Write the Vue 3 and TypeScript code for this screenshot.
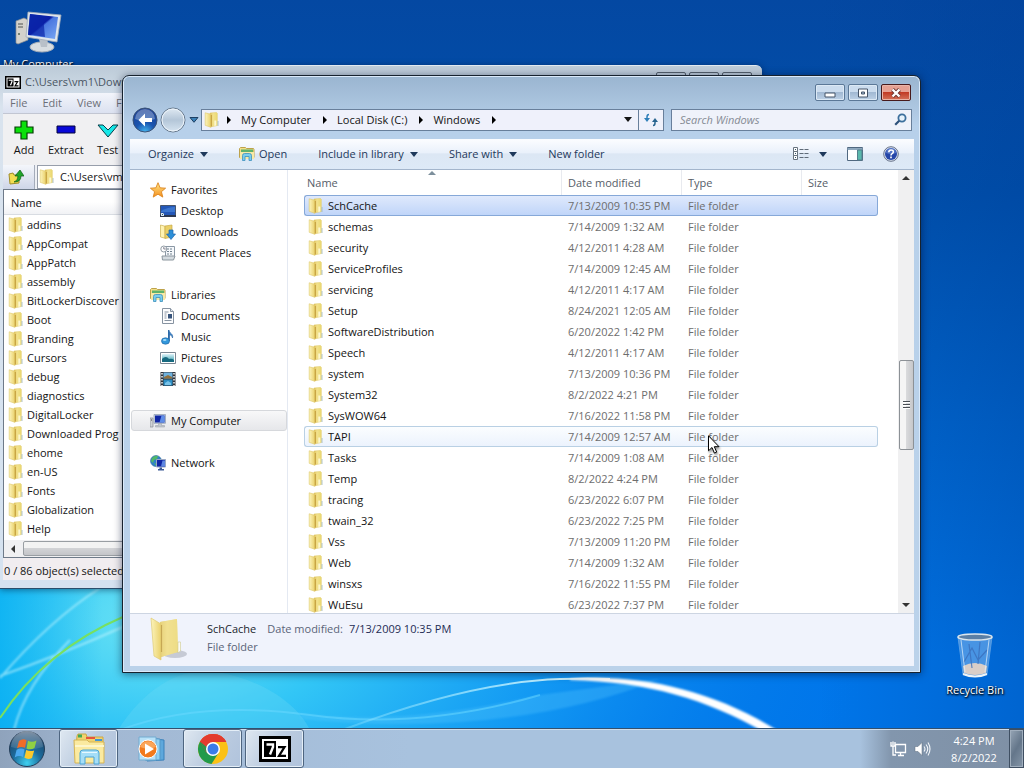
<script setup lang="ts">
import { ref } from 'vue'

interface FileRow {
  name: string
  date: string
}
interface NavItem {
  label: string
  icon: string
  level: number
  current?: boolean
}

const archiveFolders: string[] = [
  'addins', 'AppCompat', 'AppPatch', 'assembly', 'BitLockerDiscover', 'Boot',
  'Branding', 'Cursors', 'debug', 'diagnostics', 'DigitalLocker', 'Downloaded Prog',
  'ehome', 'en-US', 'Fonts', 'Globalization', 'Help',
]

const files: FileRow[] = [
  { name: 'SchCache', date: '7/13/2009 10:35 PM' },
  { name: 'schemas', date: '7/14/2009 1:32 AM' },
  { name: 'security', date: '4/12/2011 4:28 AM' },
  { name: 'ServiceProfiles', date: '7/14/2009 12:45 AM' },
  { name: 'servicing', date: '4/12/2011 4:17 AM' },
  { name: 'Setup', date: '8/24/2021 12:05 AM' },
  { name: 'SoftwareDistribution', date: '6/20/2022 1:42 PM' },
  { name: 'Speech', date: '4/12/2011 4:17 AM' },
  { name: 'system', date: '7/13/2009 10:36 PM' },
  { name: 'System32', date: '8/2/2022 4:21 PM' },
  { name: 'SysWOW64', date: '7/16/2022 11:58 PM' },
  { name: 'TAPI', date: '7/14/2009 12:57 AM' },
  { name: 'Tasks', date: '7/14/2009 1:08 AM' },
  { name: 'Temp', date: '8/2/2022 4:24 PM' },
  { name: 'tracing', date: '6/23/2022 6:07 PM' },
  { name: 'twain_32', date: '6/23/2022 7:25 PM' },
  { name: 'Vss', date: '7/13/2009 11:20 PM' },
  { name: 'Web', date: '7/14/2009 1:32 AM' },
  { name: 'winsxs', date: '7/16/2022 11:55 PM' },
  { name: 'WuEsu', date: '6/23/2022 7:37 PM' },
]

const navGroups: NavItem[][] = [
  [
    { label: 'Favorites', icon: 'star', level: 0 },
    { label: 'Desktop', icon: 'desktop', level: 1 },
    { label: 'Downloads', icon: 'downloads', level: 1 },
    { label: 'Recent Places', icon: 'recent', level: 1 },
  ],
  [
    { label: 'Libraries', icon: 'library', level: 0 },
    { label: 'Documents', icon: 'document', level: 1 },
    { label: 'Music', icon: 'music', level: 1 },
    { label: 'Pictures', icon: 'picture', level: 1 },
    { label: 'Videos', icon: 'video', level: 1 },
  ],
  [{ label: 'My Computer', icon: 'computer', level: 0, current: true }],
  [{ label: 'Network', icon: 'network', level: 0 }],
]

const crumbs: string[] = ['My Computer', 'Local Disk (C:)', 'Windows']
const selected = ref('SchCache')
const hovered = ref('TAPI')
const search = ref('')
const archivePath = ref('C:\\Users\\vm1\\Downloads\\')
</script>

<template>
  <div class="desktop">
    <svg class="defs" aria-hidden="true">
      <defs>
        <linearGradient id="gFront" x1="0" x2="1"><stop offset="0" stop-color="#fcf4bc" /><stop offset="1" stop-color="#ead16c" /></linearGradient>
        <linearGradient id="gBack" x1="0" x2="1"><stop offset="0" stop-color="#d9b94e" /><stop offset=".4" stop-color="#f3e28e" /><stop offset="1" stop-color="#ead970" /></linearGradient>
        <linearGradient id="gScreen" x1="0" y1="0" x2="1" y2="1"><stop offset="0" stop-color="#0d2fb0" /><stop offset=".45" stop-color="#0a1ea6" /><stop offset=".5" stop-color="#4a78e0" /><stop offset="1" stop-color="#7aa8f4" /></linearGradient>
        <linearGradient id="gStar" x1="0" y1="0" x2="0" y2="1"><stop offset="0" stop-color="#ffe98a" /><stop offset="1" stop-color="#f58e1c" /></linearGradient>
        <linearGradient id="gSky" x1="0" y1="0" x2="0" y2="1"><stop offset="0" stop-color="#dff4fb" /><stop offset="1" stop-color="#2c9aa8" /></linearGradient>
        <radialGradient id="gOrb" cx=".5" cy=".9" r=".9"><stop offset="0" stop-color="#3fd0f0" /><stop offset=".45" stop-color="#1c6c9c" /><stop offset="1" stop-color="#1c3c60" /></radialGradient>
        <linearGradient id="gGloss" x1="0" y1="0" x2="0" y2="1"><stop offset="0" stop-color="#fff" stop-opacity=".75" /><stop offset="1" stop-color="#fff" stop-opacity=".15" /></linearGradient>
        <radialGradient id="gNav" cx=".5" cy="1" r="1"><stop offset="0" stop-color="#45b8f0" /><stop offset=".4" stop-color="#1a55b0" /><stop offset="1" stop-color="#1c3f92" /></radialGradient>
        <linearGradient id="gFwd" x1="0" y1="0" x2="0" y2="1"><stop offset="0" stop-color="#e0eaf3" /><stop offset=".5" stop-color="#b4c6d8" /><stop offset="1" stop-color="#d6e4f1" /></linearGradient>
      </defs>
      <symbol id="folder" viewBox="0 0 16 16">
        <path d="M6 1 12.500.5l.8 1v12L6 15z" fill="url(#gBack)" stroke="#e2cc70" stroke-width=".6" />
        <path d="M1.200.8 6.800 2.300v13l-5.600-2z" fill="url(#gFront)" stroke="#dfc868" stroke-width=".6" />
        <path d="M7.300 3v11.500" stroke="#b98f2c" stroke-width=".8" />
        <path d="M10.300 8.500h2v5l-2 .6z" fill="#fdf7cf" />
        <path d="M14 9v5" stroke="#9db6c0" stroke-width=".8" />
      </symbol>
      <symbol id="bigfolder" viewBox="0 0 40 44">
        <ellipse cx="27" cy="37" rx="12" ry="4" fill="#5b6070" opacity=".28" />
        <path d="M12 5 29 2l1 33-17 5z" fill="url(#gBack)" />
        <path d="M12 5 29 2l1 33-17 5z" fill="#f0df92" opacity=".65" />
        <path d="M30 25h2.500v9L30 36z" fill="#fbfbf4" stroke="#c9c27c" stroke-width=".5" />
        <path d="M3 1l10 6v36L6 39z" fill="url(#gFront)" stroke="#e0cb74" stroke-width=".7" />
        <path d="M13.500 8v27" stroke="#b99845" stroke-width="1.200" opacity=".7" />
      </symbol>
      <symbol id="star" viewBox="0 0 16 16"><path d="M8 .7l2.100 5.100 5.500.4-4.200 3.500 1.400 5.400L8 12.200l-4.800 2.900 1.400-5.400L.4 6.200l5.500-.4z" fill="url(#gStar)" stroke="#dc8620" stroke-width=".9" /></symbol>
      <symbol id="desktop" viewBox="0 0 16 16"><path d="M.5 2.500h15v11H.5z" fill="#2458b8" stroke="#48566c" /><path d="M1 8q7-4 14-4v5H1z" fill="#4c8ade" opacity=".6" /><path d="M0 12h16v2H0z" fill="#2c3850" /><path d="M1 10h3v3H1z" fill="#dbe9f6" /><path d="M2 12l1.500-1.500" stroke="#356" /></symbol>
      <symbol id="downloads" viewBox="0 0 16 16"><path d="M.5 1 5 2.200v12L.5 13z" fill="#fff3b2" stroke="#cdb355" stroke-width=".7" /><path d="M5 2l7-1v12l-7 1.500z" fill="#ead067" stroke="#c8ab47" stroke-width=".7" /><path d="M9 6h4v4h2.500L11 15.500 6.500 10H9z" fill="#2d8fd8" stroke="#1d64ac" stroke-width=".7" /></symbol>
      <symbol id="recent" viewBox="0 0 16 16"><path d="M5.500 1.500h9v11h-9z" fill="#f5f8fb" stroke="#8b98a5" /><path d="M7 4h6M7 6.500h6M7 9h6" stroke="#71818f" stroke-dasharray="2 1" /><circle cx="3.800" cy="4" r="3" fill="#fff" stroke="#919ca5" /><path d="M3.800 2v2h2" fill="none" stroke="#667" stroke-width=".8" /><path d="M2 11h13l-1.500 4h-11z" fill="#d4dbe0" stroke="#8b969e" /></symbol>
      <symbol id="library" viewBox="0 0 16 16"><path d="M.5 2.500l1-1h5l1 1h7l.5 1v8H.5z" fill="#f3df88" stroke="#bda24b" /><path d="M2 3.500h12v3H2z" fill="#5fb26b" /><path d="M1 6h14v7H1z" fill="#f7e9a6" /><path d="M3.500 14.500v-5q0-2 2-2h5q2 0 2 2v5h-2.500v-4h-4v4z" fill="#79cdee" stroke="#3d91bd" stroke-width=".8" /></symbol>
      <symbol id="document" viewBox="0 0 16 16"><path d="M2.500.5h8l3 3v12h-11z" fill="#fdfdfe" stroke="#8793a1" /><path d="M10.500.5v3h3" fill="#dfe6ee" stroke="#8793a1" /><path d="M4.500 4h4M4.500 6h2M4.500 8h2M4.500 10h2M4.500 12.500h7" stroke="#8793a1" /><path d="M8 6h4v4.500H8z" fill="#38547c" /></symbol>
      <symbol id="music" viewBox="0 0 16 16"><path d="M8.500 1c1 3.500 5 3.500 4 8-.4-2-1.500-3-3.200-3.200V12z" fill="#3f86c8" stroke="#235e9d" stroke-width=".6" /><path d="M8.700 1v11" stroke="#2e6aa8" stroke-width="1.400" /><ellipse cx="5.500" cy="12" rx="4" ry="3.200" fill="#3298dc" stroke="#2369a6" stroke-width=".7" /><ellipse cx="4.700" cy="11" rx="1.800" ry="1" fill="#a5daf8" /></symbol>
      <symbol id="picture" viewBox="0 0 16 16"><path d="M.5 2.500h15v11H.5z" fill="#fff" stroke="#7a8793" /><path d="M2 4h12v8H2z" fill="url(#gSky)" /><path d="M2 9q4-4 7 0 3-1 5 1v2H2z" fill="#176a80" /></symbol>
      <symbol id="video" viewBox="0 0 16 16"><path d="M.5 1h15v14H.5z" fill="#31353c" /><path d="M3.500 1.500h9v6h-9z" fill="#6fb2de" /><path d="M3.500 8.500h9v6h-9z" fill="#2f8fc4" /><path d="M4 6l4-2 4 2v1.500H4z" fill="#93703c" /><path d="M5 12l3-2 3 2v2H5z" fill="#78c3ea" /><path d="M2 2v13M14 2v13" stroke="#fff" stroke-width="1.400" stroke-dasharray="1.500 1.500" /></symbol>
      <symbol id="computer" viewBox="0 0 16 16"><path d="M0 5h3v9H0z" fill="#cfd2d6" stroke="#888e96" stroke-width=".7" /><path d="M1 7h1" stroke="#444" /><path d="M4 1.500h11.500v8.800H4z" fill="#ccd5e4" stroke="#8b99ae" stroke-width=".7" /><path d="M5 2.500h9.500v7H5z" fill="#1026a4" /><path d="M11.500 2.500h3v7h-5z" fill="#5f8de8" /><path d="M8.500 10.500h3v2h3v1.500h-9v-1.500h3z" fill="#c1c6cd" stroke="#969ca5" stroke-width=".5" /></symbol>
      <symbol id="network" viewBox="0 0 16 16"><circle cx="6" cy="6" r="5.500" fill="#2f80c9" stroke="#3d709a" stroke-width=".6" /><path d="M2 3q3-3 6-2l-1 3-3 1-1 3-2-2zM4 8l3 1-1 2z" fill="#51b868" /><path d="M6.500 4.500h9v7.500h-9z" fill="#1026a4" stroke="#9aa9c4" /><path d="M12.500 5.500H15v6h-4z" fill="#5e87e2" /><path d="M9.500 12.500h2.500V14h2v1.500H8V14h1.500z" fill="#3c5a96" /></symbol>
      <symbol id="tri" viewBox="0 0 8 5"><path d="M0 0h8L4 5z" fill="currentColor" /></symbol>
      <symbol id="sevenz" viewBox="0 0 32 26">
        <path d="M0 0h32v26H0z" fill="#000" /><path d="M3 3h26v20H3z" fill="#fff" /><path d="M5 5h12v16H5z" fill="#000" />
        <path d="M7.500 8.500h6.500v2.500l-3 7.500" fill="none" stroke="#fff" stroke-width="2.400" />
        <path d="M19 11.200h6.500L20 19.800H27" fill="none" stroke="#000" stroke-width="2.200" />
      </symbol>
    </svg>

    <svg class="wallpaper" viewBox="0 0 1024 768" preserveAspectRatio="none" aria-hidden="true">
      <defs>
        <linearGradient id="wBase" x1="0" y1="0" x2="0" y2="1"><stop offset="0" stop-color="#0448a2" /><stop offset=".25" stop-color="#0050ac" /><stop offset=".55" stop-color="#0065cd" /><stop offset=".85" stop-color="#0076ea" /><stop offset="1" stop-color="#0076ea" /></linearGradient>
        <radialGradient id="wGlow" gradientUnits="userSpaceOnUse" cx="160" cy="620" r="720" gradientTransform="translate(160 620) scale(1 .6) translate(-160 -620)"><stop offset="0" stop-color="#6ce4f4" /><stop offset=".25" stop-color="#32c6f6" /><stop offset=".55" stop-color="#149cf4" stop-opacity=".9" /><stop offset="1" stop-color="#0076ea" stop-opacity="0" /></radialGradient>
        <linearGradient id="wEdge" x1="0" x2="1"><stop offset=".8" stop-color="#003c94" stop-opacity="0" /><stop offset="1" stop-color="#003c94" stop-opacity=".3" /></linearGradient>
        <linearGradient id="wLeft" x1="0" x2="1"><stop offset="0" stop-color="#00acf2" stop-opacity=".7" /><stop offset=".1" stop-color="#00acf2" stop-opacity="0" /></linearGradient>
        <linearGradient id="wArc" gradientUnits="userSpaceOnUse" x1="340" y1="0" x2="700" y2="0"><stop offset="0" stop-color="#8fe4ff" stop-opacity=".3" /><stop offset=".6" stop-color="#c8f2ff" /><stop offset="1" stop-color="#fff" /></linearGradient>
        <filter id="soft"><feGaussianBlur stdDeviation="1" /></filter>
      </defs>
      <path d="M0 0h1024v768H0z" fill="url(#wBase)" />
      <path d="M0 0h1024v768H0z" fill="url(#wGlow)" />
      <path d="M0 0h1024v768H0z" fill="url(#wEdge)" />
      <path d="M0 580h1024v188H0z" fill="url(#wLeft)" />
      <path d="M118 730C150 680 190 665 222 673c40 8 75 30 88 57z" fill="#73dcf6" opacity=".28" />
      <path d="M300 713q100 14 240-18l120-16q-150 60-360 40z" fill="#58c8ff" opacity=".3" filter="url(#soft)" />
      <path d="M120 730Q200 700 310 715t230-20" fill="none" stroke="#6bd9ff" stroke-width="2" opacity=".5" />
      <path d="M345 729Q470 682 560 679q30-1 50 0" fill="none" stroke="url(#wArc)" stroke-width="2" />
      <path d="M570 679C640 673 715 691 780 732h-16C705 699 650 682 570 680z" fill="#fff" filter="url(#soft)" />
      <path d="M0 676Q60 655 125 626M0 678Q50 620 100 588M14 730Q25 685 70 640" fill="none" stroke="#c5f6ff" stroke-width="2" opacity=".6" filter="url(#soft)" />
      <path d="M0 718Q45 650 125 616" fill="none" stroke="#78e060" stroke-width="2" />
    </svg>

    <button class="shortcut computer-shortcut">
      <svg viewBox="0 0 48 44" width="48" height="44" aria-hidden="true">
        <path d="M2 11l8-3 4 2v20l-10 4-2-1z" fill="#d4d2cc" stroke="#8d8f90" stroke-width=".7" /><path d="M4 14h5M4 17h5" stroke="#4f5350" /><circle cx="5" cy="24" r="1" fill="#565" />
        <ellipse cx="28" cy="37" rx="12" ry="5" fill="#d8dde1" stroke="#a9b0b8" /><path d="M25 29h9l-1 8h-6z" fill="#b9c0c8" />
        <path d="M14 2l33 3-4 27-31-5z" fill="#dfe6ec" stroke="#9faab8" stroke-width=".8" /><path d="M16 4l28 3-3 22-27-4z" fill="url(#gScreen)" /><path d="M16 4l13 2 2 21-17-3z" fill="#0a23a8" opacity=".7" />
      </svg>
      <span>My Computer</span>
    </button>

    <button class="shortcut bin-shortcut">
      <svg viewBox="0 0 40 48" width="40" height="48" aria-hidden="true">
        <path d="M3 5h34l-5 37q-12 5-24 0z" fill="#9fcaf4" opacity=".45" stroke="#c3def4" /><path d="M8 34q12-6 24 0l-1 7q-11 4-22 0z" fill="#d9cec8" /><path d="M9 30l8-14 6 12 9-10M14 12l3 24M25 10l-2 22" fill="none" stroke="#3b6fbc" stroke-width="1.200" opacity=".8" />
        <path d="M6 8l4 32M34 8l-4 32" stroke="#e7f3fb" opacity=".7" /><ellipse cx="20" cy="5" rx="17" ry="3" fill="#5b7fa5" stroke="#dbe5ec" stroke-width="1.500" /><path d="M8 42q12 5 24 0" fill="none" stroke="#eef4f8" stroke-width="2" />
      </svg>
      <span>Recycle Bin</span>
    </button>

    <section class="window archive" aria-label="7-Zip File Manager">
      <header class="archive-title">
        <svg class="seven-small" aria-hidden="true"><use href="#sevenz" /></svg>
        <span>C:\Users\vm1\Downloads\</span>
        <div class="archive-controls">
          <button aria-label="Minimize"></button><button aria-label="Maximize"></button><button aria-label="Close"></button>
        </div>
      </header>
      <nav class="menubar">
        <button>File</button><button>Edit</button><button>View</button><button>Favorites</button>
      </nav>
      <div class="archive-tools">
        <button><svg viewBox="0 0 22 20" aria-hidden="true"><path d="M8 1h6v6h6v6h-6v6H8v-6H2V7h6z" fill="#0be00b" stroke="#063f06" stroke-width="1.200" /></svg>Add</button>
        <button><svg viewBox="0 0 22 20" aria-hidden="true"><path d="M2 6h18v7H2z" fill="#0808d8" stroke="#04043c" /></svg>Extract</button>
        <button><svg viewBox="0 0 22 20" aria-hidden="true"><path d="M1 5h5l5 5 5-5h5L11 17z" fill="#16e8e8" stroke="#063e4a" /></svg>Test</button>
      </div>
      <div class="archive-path">
        <button aria-label="Up one level">
          <svg viewBox="0 0 16 16" width="16" height="16" aria-hidden="true"><path d="M1 5l4-1 1 2h5v8l-9 1z" fill="#f2dd50" stroke="#a08c28" /><path d="M6 13q4-1 4-6H7l5-6 4 6h-3q0 6-7 6z" fill="#22a52a" stroke="#0c5b14" stroke-width=".7" /></svg>
        </button>
        <div class="path-box">
          <svg class="i16" aria-hidden="true"><use href="#folder" /></svg>
          <input v-model="archivePath" aria-label="Path" type="text" />
        </div>
      </div>
      <div class="archive-list">
        <div class="archive-head">Name</div>
        <ul>
          <li v-for="f in archiveFolders" :key="f"><svg class="i16" aria-hidden="true"><use href="#folder" /></svg>{{ f }}</li>
        </ul>
        <div class="hscroll">
          <svg viewBox="0 0 4 8" width="4" height="8" aria-hidden="true"><path d="M4 0v8L0 4z" fill="#333" /></svg>
          <div class="hthumb"></div>
        </div>
      </div>
      <footer class="archive-status">0 / 86 object(s) selected</footer>
    </section>

    <section class="window explorer" aria-label="Windows">
      <header class="controls">
        <button aria-label="Minimize"><svg viewBox="0 0 14 10" width="14" height="10" aria-hidden="true"><path d="M2 5h10v4H2z" fill="#fff" stroke="#455468" /></svg></button>
        <button aria-label="Maximize"><svg viewBox="0 0 14 10" width="14" height="10" aria-hidden="true"><path d="M2.500 1h9v8h-9zM5.500 4v2h3V4z" fill="#fff" fill-rule="evenodd" stroke="#455468" /></svg></button>
        <button class="close" aria-label="Close"><svg viewBox="0 0 14 10" width="14" height="10" aria-hidden="true"><path d="M3.500 1.500l7 7M10.500 1.500l-7 7" stroke="#6b3430" stroke-width="4" /><path d="M3.500 1.500l7 7M10.500 1.500l-7 7" stroke="#fff" stroke-width="2.400" /></svg></button>
      </header>

      <div class="address-row">
        <div class="history">
          <button aria-label="Back"><svg viewBox="0 0 26 26" width="26" height="26" aria-hidden="true"><circle cx="13" cy="13" r="12" fill="url(#gNav)" stroke="#3c5377" /><path d="M3 12a10 10 0 0 1 20 0q-10 4-20 0z" fill="#fff" opacity=".3" /><path d="M13 6.500L6.500 13l6.500 6.500v-4.500h7v-4h-7z" fill="#fff" /></svg></button>
          <button aria-label="Forward"><svg viewBox="0 0 26 26" width="26" height="26" aria-hidden="true"><circle cx="13" cy="13" r="12" fill="url(#gFwd)" stroke="#66788c" /><circle cx="13" cy="13" r="11" fill="none" stroke="#eef5fb" /></svg></button>
          <button class="recent" aria-label="Recent pages"><svg viewBox="0 0 10 6" width="10" height="6" aria-hidden="true"><path d="M1 .5h8L5 5.300z" fill="#3b81b8" stroke="#1d3f63" /></svg></button>
        </div>
        <div class="address">
          <svg class="i16" aria-hidden="true"><use href="#folder" /></svg>
          <svg class="sep" viewBox="0 0 4 8" aria-hidden="true"><path d="M0 0v8l4-4z" /></svg>
          <template v-for="c in crumbs" :key="c">
            <button>{{ c }}</button>
            <svg class="sep" viewBox="0 0 4 8" aria-hidden="true"><path d="M0 0v8l4-4z" /></svg>
          </template>
          <button class="drop" aria-label="Previous locations"><svg class="tri" aria-hidden="true"><use href="#tri" /></svg></button>
          <button class="refresh" aria-label="Refresh">
            <svg viewBox="0 0 16 14" width="16" height="14" aria-hidden="true"><path d="M6 1.500Q4 1.500 4 4v2" fill="none" stroke="#2f7fb9" stroke-width="1.500" /><path d="M1 5h6L4 9z" fill="#2f7fb9" /><path d="M10 12.500q2 0 2-2.500V8" fill="none" stroke="#28648f" stroke-width="1.500" /><path d="M9 9h6L12 5z" fill="#28648f" /></svg>
          </button>
        </div>
        <div class="search">
          <input v-model="search" type="text" placeholder="Search Windows" aria-label="Search Windows" />
          <svg viewBox="0 0 13 13" width="13" height="13" aria-hidden="true"><circle cx="8" cy="5" r="3.600" fill="#e6f2fb" stroke="#3c6f9c" stroke-width="1.800" /><path d="M5.200 7.800L1.200 11.800" stroke="#2c507a" stroke-width="2.200" /></svg>
        </div>
      </div>

      <div class="client">
        <div class="toolbar">
          <button>Organize <svg class="tri" aria-hidden="true"><use href="#tri" /></svg></button>
          <button class="open"><svg class="i16" aria-hidden="true"><use href="#library" /></svg>Open</button>
          <button>Include in library <svg class="tri" aria-hidden="true"><use href="#tri" /></svg></button>
          <button>Share with <svg class="tri" aria-hidden="true"><use href="#tri" /></svg></button>
          <button>New folder</button>
          <div class="view-tools">
            <button class="views" aria-label="Change your view">
              <svg viewBox="0 0 16 14" width="16" height="14" aria-hidden="true"><path d="M.5.5h4v4h-4zM.5 4.500h4v4h-4zM.5 8.500h4v4h-4z" fill="#fff" stroke="#68737f" /><path d="M2 2.500h1M2 6.500h1M2 10.500h1" stroke="#356" /><path d="M6.500 2.500h9M6.500 6.500h9M6.500 10.500h9" stroke="#5f6b78" stroke-dasharray="4 1" /></svg>
              <svg class="tri" aria-hidden="true"><use href="#tri" /></svg>
            </button>
            <button aria-label="Show the preview pane"><svg viewBox="0 0 16 14" width="16" height="14" aria-hidden="true"><path d="M.5.5h15v13H.5z" fill="#fdfeff" stroke="#506880" /><path d="M.5 2h15" stroke="#8ea8be" stroke-width="2" /><path d="M10.500 3h4.500v10h-4.500z" fill="#59b8ac" stroke="#527e8c" /></svg></button>
            <button aria-label="Get help"><svg viewBox="0 0 16 16" width="16" height="16" aria-hidden="true"><circle cx="8" cy="8" r="7.300" fill="#dce5f2" stroke="#667188" /><circle cx="8" cy="8" r="6" fill="#2546a8" /><path d="M3 7a5 5 0 0 1 10 0q-5 2-10 0z" fill="#7fa0e4" opacity=".5" /><path d="M5.800 6.300q0-2.300 2.300-2.300t2.200 1.900q0 1-1.200 1.700T8 9.500" fill="none" stroke="#fff" stroke-width="1.600" /><path d="M8 10.600v1.700" stroke="#fff" stroke-width="1.700" /></svg></button>
          </div>
        </div>

        <div class="panes">
          <nav class="tree" aria-label="Navigation">
            <ul v-for="(g, i) in navGroups" :key="i">
              <li v-for="n in g" :key="n.label">
                <a href="#" :class="{ child: n.level === 1, current: n.current }"><svg class="i16" aria-hidden="true"><use :href="'#' + n.icon" /></svg>{{ n.label }}</a>
              </li>
            </ul>
          </nav>
          <div class="files">
            <table>
              <colgroup><col /><col class="c-date" /><col class="c-type" /><col class="c-size" /></colgroup>
              <thead>
                <tr><th scope="col" class="sorted">Name<svg viewBox="0 0 8 4" width="8" height="4" aria-hidden="true"><path d="M0 4l4-4 4 4z" fill="#7d8f9c" /></svg></th><th scope="col">Date modified</th><th scope="col">Type</th><th scope="col">Size</th></tr>
              </thead>
              <tbody>
                <tr v-for="f in files" :key="f.name" :class="{ selected: f.name === selected, hovered: f.name === hovered }" @click="selected = f.name" @mouseenter="hovered = f.name">
                  <td><svg class="i16" aria-hidden="true"><use href="#folder" /></svg><span>{{ f.name }}</span></td>
                  <td>{{ f.date }}</td>
                  <td>File folder</td>
                  <td></td>
                </tr>
              </tbody>
            </table>
          </div>
          <div class="vscroll">
            <svg viewBox="0 0 8 4" width="8" height="4" aria-hidden="true"><path d="M0 4l4-4 4 4z" fill="#333" /></svg>
            <div class="track"><div class="before"></div><div class="vthumb"><i></i><i></i><i></i></div><div class="after"></div></div>
            <svg viewBox="0 0 8 4" width="8" height="4" aria-hidden="true"><path d="M0 0h8L4 4z" fill="#333" /></svg>
          </div>
        </div>

        <footer class="details">
          <svg width="40" height="44" aria-hidden="true"><use href="#bigfolder" /></svg>
          <div>
            <p><strong>SchCache</strong><span>Date modified:</span><em>7/13/2009 10:35 PM</em></p>
            <p><span>File folder</span></p>
          </div>
        </footer>
      </div>
    </section>

    <footer class="taskbar">
      <button class="start" aria-label="Start">
        <svg viewBox="0 0 38 38" width="38" height="38" aria-hidden="true"><circle cx="19" cy="19" r="17.500" fill="url(#gOrb)" stroke="#233d58" /><path d="M3 17a16 16 0 0 1 32 0q-16 5-32 0z" fill="url(#gGloss)" opacity=".6" /><path d="M11 11q4-3 7.500-.8L17 17.800q-4-2-8 .4z" fill="#f06c28" /><path d="M20 10.800q4 2.200 8.500-.4L26.500 18q-4 2.400-8 .4z" fill="#8fd043" /><path d="M8.600 19.800q4-2.400 8-.4L15 27q-4-2.200-8.300.4z" fill="#4aa8ee" /><path d="M18.200 20q4 2 8 .4L24 28q-4 2-7.600-.2z" fill="#fbc92c" /></svg>
      </button>
      <button class="task open-task" aria-label="Windows Explorer">
        <svg viewBox="0 0 34 32" width="34" height="32" aria-hidden="true"><path d="M5 3l1-2h8l1 3h16v12H4z" fill="#f1d36f" stroke="#cda744" /><path d="M6 1.500h4v3H6z" fill="#42a955" /><path d="M14 4h9v2h-9z" fill="#e7543c" /><path d="M23 6h7v2h-7z" fill="#4295d6" /><path d="M2 7h13l2 2h15v21H3z" fill="#fbeaa0" stroke="#d5b455" /><path d="M3 13h29" stroke="#fdf6cc" stroke-width="2" /><path d="M8 31V20q0-3 3-3h13q3 0 3 3v11h-5v-7h-9v7z" fill="#a5def7" stroke="#4ba4d4" /><path d="M10 19.500h15" stroke="#e7f8ff" /></svg>
      </button>
      <button class="task" aria-label="Windows Media Player">
        <svg viewBox="0 0 28 26" width="28" height="26" aria-hidden="true"><path d="M10 2l17 2v20l-17 1z" fill="#5ea8dc" stroke="#3b81bb" /><path d="M8 2l15 1v21H8z" fill="#8ed0f4" stroke="#5597c6" /><path d="M2 1h17v23H2z" fill="#b7e1f8" stroke="#72abd0" /><circle cx="11" cy="13" r="9" fill="#f27a1d" stroke="#fff" /><path d="M3 11a8.500 8.500 0 0 1 16 0q-8 3-16 0z" fill="#ffc184" opacity=".6" /><path d="M8 7.500v11l9-5.500z" fill="#fff" /></svg>
      </button>
      <button class="task open-task" aria-label="Google Chrome">
        <svg viewBox="0 0 32 32" width="32" height="32" aria-hidden="true"><circle cx="16" cy="16" r="15" fill="#fbc116" /><path d="M16 16L3 8.500A15 15 0 0 0 14.500 31l7-11z" fill="#229a4b" /><path d="M3 8.500A15 15 0 0 1 29.300 9H16l-6.500 11z" fill="#e33b2e" /><path d="M3 8.500L9.800 20 14 12z" fill="#229a4b" /><path d="M3 8.500A15 15 0 0 1 29.300 9H16q-5 0-6.600 5z" fill="#e33b2e" /><circle cx="16" cy="16" r="7" fill="#fff" /><circle cx="16" cy="16" r="5.500" fill="#3a7ce8" /></svg>
      </button>
      <button class="task open-task" aria-label="7-Zip File Manager"><svg width="32" height="26" aria-hidden="true"><use href="#sevenz" /></svg></button>
      <div class="tray">
        <svg viewBox="0 0 17 16" width="17" height="16" aria-label="Network"><path d="M5.500 3.500h10v8h-10zM8 14.500h6M10.500 12v2" fill="none" stroke="#fff" stroke-width="1.300" /><path d="M1 1v4h4V1M3 .5V4M3 5v9h3" fill="none" stroke="#fff" stroke-width="1.300" /></svg>
        <svg viewBox="0 0 17 16" width="17" height="16" aria-label="Volume"><path d="M1 5.500h3L8 1.500v13L4 10.500H1z" fill="#fff" stroke="#5d6c7e" stroke-width=".5" /><path d="M10 5.500q2 2.500 0 5M12 3.500q3.500 4.500 0 9M14 1.500q4 6.500 0 13" fill="none" stroke="#f2f6fa" stroke-width="1.100" /></svg>
        <time><span>4:24 PM</span><span>8/2/2022</span></time>
        <button class="show-desktop" aria-label="Show desktop"></button>
      </div>
    </footer>

    <svg class="cursor" viewBox="0 0 12 19" width="12" height="19" aria-hidden="true"><path d="M.5.800v15l3.500-3.300 2.400 5.600 2.300-1-2.400-5.400h4.700z" fill="#fff" stroke="#000" /></svg>
  </div>
</template>

<style>
html, body { margin: 0; overflow: hidden; }
</style>

<style scoped>
* { box-sizing: border-box; }
.desktop { position: relative; display: flex; flex-direction: column; height: 100vh; overflow: hidden; background: #0060c8; font: 11px/16px "Open Sans", "Noto Sans", sans-serif; color: #141414; }
.defs { position: absolute; width: 0; height: 0; }
.wallpaper { position: absolute; inset: 0; width: 100%; height: 100%; }
button { display: inline-flex; align-items: center; margin: 0; padding: 0; border: 0; background: none; font: inherit; color: inherit; white-space: nowrap; }
input { font: inherit; color: inherit; min-width: 0; border: 0; padding: 0; background: none; outline: 0; }
ul { list-style: none; margin: 0; padding: 0; }
svg { flex: none; }
.i16 { width: 16px; height: 16px; }
.tri { width: 8px; height: 5px; }

.shortcut { position: absolute; flex-direction: column; color: #fff; text-shadow: 0 1px 2px #000, 1px 1px 2px #000; }
.computer-shortcut { left: 2px; top: 10px; width: 72px; }
.computer-shortcut span { margin-top: 2px; }
.bin-shortcut { right: 14px; bottom: 70px; width: 70px; gap: 2px; }

.window { position: absolute; display: flex; flex-direction: column; overflow: hidden; }
.archive { left: 0; top: 65px; right: 262px; bottom: 179px; border-top: 1px solid #e2e9ef; border-bottom: 1px solid #2b4e6c; border-radius: 0 6px 0 0; background: linear-gradient(#bccbd8, #d9e3ee 40px, #d5e2f0); padding: 0 8px 8px 3px; box-shadow: 0 1px 6px rgba(0, 20, 50, .5); }
.archive-title { display: flex; align-items: center; height: 27px; padding: 5px 0 0 2px; gap: 4px; color: #4a5663; }
.seven-small { width: 16px; height: 13px; }
.archive-controls { display: flex; align-self: flex-start; margin: 1px 2px 0 auto; gap: 3px; }
.archive-controls button { width: 30px; height: 17px; border: 1px solid #56616d; border-radius: 2px; }
.menubar { display: flex; align-items: center; gap: 15px; height: 21px; padding-left: 7px; background: linear-gradient(#f3f5fb, #dbe1f0); color: #6c6f78; border-bottom: 1px solid #c2c6d2; }
.archive-tools { display: flex; gap: 13px; height: 51px; padding: 6px 0 0 10px; background: #f0f0f2; align-items: flex-start; }
.archive-tools button { flex-direction: column; gap: 2px; }
.archive-tools svg { width: 22px; height: 20px; }
.archive-path { display: flex; height: 24px; background: #eef0f5; }
.archive-path > button { width: 32px; justify-content: center; padding-right: 6px; background: linear-gradient(#f4f6fb, #cfd6e8); border-right: 1px solid #a5acba; }
.path-box { display: flex; flex: 1; align-items: center; gap: 5px; margin-left: 2px; padding-left: 1px; background: #fff; border: 1px solid #979eab; }
.path-box input { flex: 1; }
.archive-list { display: flex; flex: 1; flex-direction: column; min-height: 0; background: #fff; border: 1px solid #6e7a89; border-right: 0; }
.archive-head { height: 25px; padding: 5px 7px; background: linear-gradient(#fff 50%, #f1f2f5); border-bottom: 1px solid #d8dce2; }
.archive-list ul { flex: 1; overflow: hidden; }
.archive-list li { display: flex; align-items: center; gap: 3px; height: 19px; padding-left: 4px; white-space: nowrap; }
.hscroll { display: flex; align-items: center; height: 17px; gap: 8px; padding-left: 7px; background: #f0f0f2; }
.hthumb { flex: 1; height: 15px; border: 1px solid #999ea3; border-radius: 2px; background: linear-gradient(#f3f3f3 45%, #d2d3d6 50%, #c4c5c9); }
.archive-status { height: 22px; padding: 5px 1px; background: #f1edf0; }

.explorer { left: 122px; top: 75px; right: 103px; bottom: 95px; padding: 0 6px 6px 7px; border: 1px solid #17222e; border-radius: 7px 7px 0 0; background: linear-gradient(#9ab5d0, #b7d0ea 50px, #bbd2ea); box-shadow: inset 0 0 0 1px #dbeafa, 0 1px 8px rgba(0, 15, 45, .55); }
.controls { display: flex; justify-content: flex-end; gap: 3px; height: 26px; padding: 8px 3px 0 0; }
.controls button { justify-content: center; width: 30px; height: 17px; border: 1px solid #5b7897; border-radius: 2px; background: linear-gradient(#cbdcee 45%, #a1b9d3 50%, #bdd1e6); box-shadow: inset 0 0 0 1px #dce9f5; }
.controls .close { border-color: #471a1c; background: linear-gradient(#e6a193 45%, #c13b25 50%, #d4735a); box-shadow: inset 0 0 0 1px #eab5a8; }
.address-row { display: flex; align-items: center; height: 37px; padding: 0 2px 2px; }
.history { display: flex; align-items: center; gap: 2px; }
.history .recent { width: 12px; justify-content: center; }
.address { display: flex; flex: 1; align-items: center; height: 22px; margin-left: 1px; padding-left: 2px; background: #eff1fb; border: 1px solid #687f9b; }
.address button { margin-right: 12px; }
.sep { width: 4px; height: 8px; margin: 0 10px 0 0; }
.address .i16 { margin-right: 7px; }
.address .drop { width: 20px; height: 20px; justify-content: center; margin: 0 0 0 auto; }
.address .refresh { width: 25px; height: 20px; justify-content: center; margin: 0; border-left: 1px solid #687f9b; color: #28648f; }
.search { display: flex; flex: 0 1 241px; align-items: center; height: 22px; margin-left: 7px; padding: 0 4px 0 8px; border: 1px solid #687f9b; background: #eff2fa; }
.search input { flex: 1; }
.search input::placeholder { color: #858b94; font-style: italic; opacity: 1; }

.client { display: flex; flex: 1; flex-direction: column; min-height: 0; background: #fff; }
.toolbar { display: flex; align-items: center; height: 31px; padding: 0 15px 0 18px; color: #1e395b; background: linear-gradient(#fcfdff, #eaf1fb 45%, #dce7f4 50%, #dde9f7); border-bottom: 1px solid #a3b5cc; }
.toolbar > button { margin-right: 31px; gap: 6px; }
.toolbar .open { gap: 4px; }
.view-tools { display: flex; align-items: center; margin-left: auto; gap: 20px; }
.views { gap: 10px; }
.panes { display: flex; flex: 1; min-height: 0; }
.tree { width: 158px; padding: 9px 0 0 1px; border-right: 1px solid #e4e9f2; overflow: hidden; }
.tree ul { margin-bottom: 21px; }
.tree a { display: flex; align-items: center; gap: 5px; height: 21px; padding-left: 18px; border: 1px solid transparent; color: inherit; text-decoration: none; }
.tree .child { padding-left: 28px; }
.tree .current { border-color: #d6d8dc; border-radius: 3px; background: linear-gradient(#f8f8f9, #e6e7ea); }
.files { flex: 1; min-width: 0; padding: 0 20px 0 16px; overflow: hidden; }
table { width: 100%; table-layout: fixed; border-collapse: separate; border-spacing: 0; }
.c-date, .c-type { width: 120px; }
.c-size { width: 77px; }
th { position: relative; height: 25px; padding: 0 6px; text-align: left; font-weight: 400; color: #565d68; border-left: 1px solid #e8eaef; }
th:first-child { padding-left: 2px; border-left-color: transparent; }
.sorted svg { position: absolute; left: 48%; top: 1px; display: block; }
td { height: 21px; padding: 0 7px; border: 1px solid transparent; border-width: 1px 0; color: #6d6d6d; white-space: nowrap; overflow: hidden; line-height: 16px; }
td:first-child { padding-left: 3px; border-left-width: 1px; border-radius: 3px 0 0 3px; color: #141414; }
td:last-child { border-right-width: 1px; border-radius: 0 3px 3px 0; }
td .i16 { margin-right: 4px; vertical-align: top; }
.selected td { border-color: #86a8d8; background: linear-gradient(#dfe9fc, #c0d5f9); }
.hovered td { border-color: #b9d0e4; background: linear-gradient(#fbfdff, #ecf3fd); }
.vscroll { display: flex; flex-direction: column; align-items: center; justify-content: space-between; width: 16px; padding: 6px 0; background: #f0f0f1; }
.track { display: flex; flex: 1; flex-direction: column; width: 15px; padding: 10px 0; }
.before { flex: 170; }
.after { flex: 143; }
.vthumb { display: flex; flex: 88; flex-direction: column; align-items: center; justify-content: center; gap: 1px; border: 1px solid #8c9196; border-radius: 2px; background: linear-gradient(90deg, #f5f5f5 45%, #d9dadc 50%, #c6c7ca); }
.vthumb i { width: 7px; height: 2px; border-top: 1px solid #4a4f55; background: #fff; }
.details { display: flex; align-items: center; gap: 19px; height: 53px; padding: 0 18px 2px; background: #f0f3fc; border-top: 1px solid #cdd5e2; color: #5a6478; }
.details p { display: flex; height: 18px; margin: 0; gap: 6px; }
.details strong { margin-right: 5px; font-weight: 400; color: #1b1f2c; }
.details em { font-style: normal; color: #1e2c54; }

.taskbar { position: relative; display: flex; align-items: center; height: 40px; margin-top: auto; border-top: 1px solid #33506e; box-shadow: inset 0 1px 0 #cfdeec; background: linear-gradient(90deg, #8fa3bc, #a2b8d3 10%, #a8c2de 40%, #a8c2de 84%, #8296ad 87%, #7f90a5); }
.start { width: 59px; padding-left: 8px; }
.task { justify-content: center; width: 59px; height: 39px; margin-right: 3px; border: 1px solid transparent; border-radius: 3px; }
.open-task { border-color: #4e6580; background: linear-gradient(120deg, #dfe8f1, #bccce0 50%, #b0c3dc); box-shadow: inset 0 0 0 1px #e4eef7; }
.tray { display: flex; align-items: center; align-self: stretch; margin-left: auto; gap: 7px; color: #fff; }
time { display: flex; flex-direction: column; align-items: center; width: 68px; margin-left: 2px; line-height: 17px; }
.show-desktop { align-self: stretch; width: 15px; margin-left: -6px; border: 1px solid #3f4f62; box-shadow: inset 0 0 0 1px #a0aebd; background: linear-gradient(120deg, #97a6b6, #64768a 50%, #8596a8); }
.cursor { position: absolute; left: 708px; top: 435px; filter: drop-shadow(1px 2px 1px rgba(0, 0, 0, .4)); }
</style>
